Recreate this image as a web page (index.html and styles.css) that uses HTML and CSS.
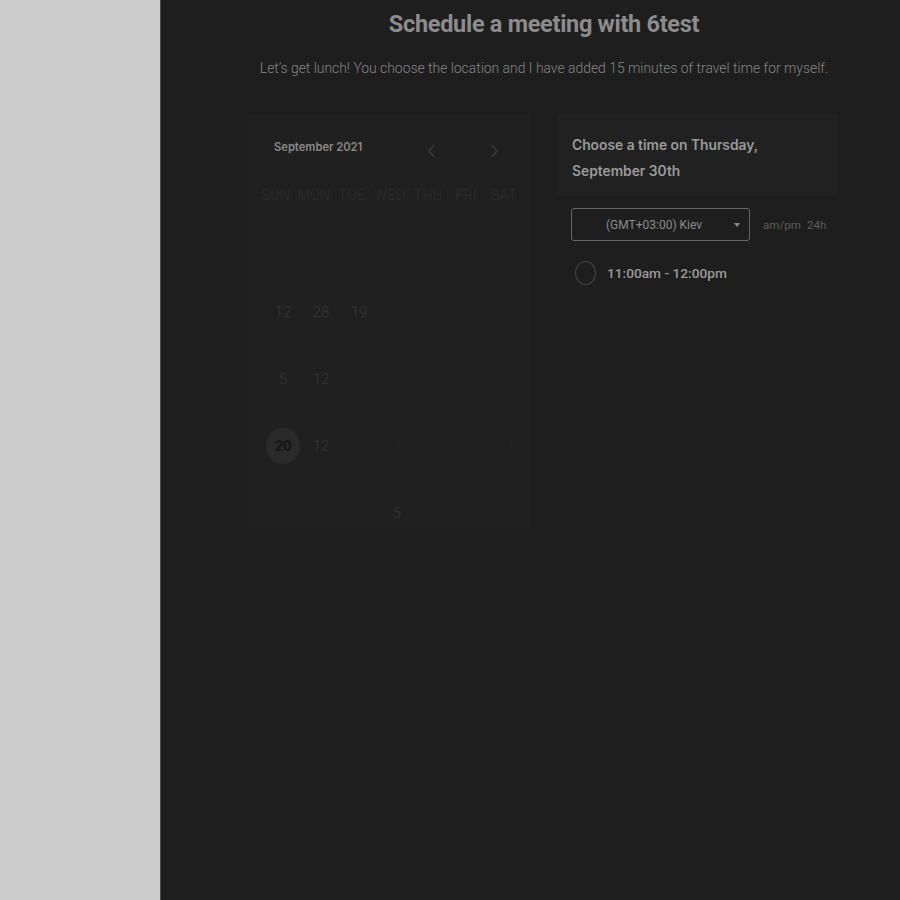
FILE: index.html
```html
<!DOCTYPE html>
<html>
<head>
<meta charset="utf-8">
<link rel="stylesheet" href="styles.css">
</head>
<body>
<div class="app">
  <aside class="sidebar"></aside>
  <main class="main">
    <div class="content">
      <h1 class="title">Schedule a meeting with 6test</h1>
      <p class="subtitle">Let’s get lunch! You choose the location and I have added 15 minutes of travel time for myself.</p>
      <div class="columns">
        <section class="calendar">
          <div class="cal-head">
            <span class="month">September 2021</span>
            <span class="arrows">
              <svg class="arrow" width="10" height="14" viewBox="0 0 10 14"><path d="M7 1 L2 7 L7 13" fill="none" stroke="currentColor" stroke-width="1.3"/></svg>
              <svg class="arrow" width="10" height="14" viewBox="0 0 10 14"><path d="M3 1 L8 7 L3 13" fill="none" stroke="currentColor" stroke-width="1.3"/></svg>
            </span>
          </div>
          <div class="grid dows">
            <span>SUN</span><span>MON</span><span>TUE</span><span>WED</span><span>THU</span><span>FRI</span><span>SAT</span>
          </div>
          <div class="grid days">
            <span class="ghost"></span><span class="ghost">·</span><span></span><span class="ghost">·</span><span></span><span></span><span class="ghost">·</span>
            <span>12</span><span>28</span><span>19</span><span class="ghost">1</span><span class="ghost">·</span><span></span><span class="ghost">·</span>
            <span>5</span><span>12</span><span class="ghost">·</span><span class="ghost">·</span><span></span><span class="ghost">·</span><span></span>
            <span class="sel"><b>20</b></span><span>12</span><span></span><span class="ghost">1</span><span class="ghost">·</span><span></span><span class="ghost">1</span>
            <span class="ghost">.</span><span></span><span></span><span>5</span><span class="ghost">.</span><span></span><span class="ghost">.</span>
          </div>
        </section>
        <section class="times">
          <div class="time-head">Choose a time on Thursday, September 30th</div>
          <div class="tz-row">
            <div class="select">
              <span>(GMT+03:00) Kiev</span>
              <svg class="caret" width="6" height="4" viewBox="0 0 6 4"><path d="M0 0 H6 L3 4 Z" fill="currentColor"/></svg>
            </div>
            <div class="fmt"><span>am/pm</span><span>24h</span></div>
          </div>
          <div class="slot">
            <span class="radio"></span>
            <span class="slot-text">11:00am - 12:00pm</span>
          </div>
        </section>
      </div>
    </div>
  </main>
</div>
</body>
</html>
```
FILE: styles.css
```css
html, body {
  margin: 0;
  padding: 0;
  height: 100%;
  background: #1e1e1e;
}
body {
  font-family: Roboto, "Liberation Sans", sans-serif;
}
.app {
  display: flex;
  height: 900px;
}
.sidebar {
  width: 160px;
  flex: none;
  background: #cccccc;
  border-right: 1px solid #4a4a4a;
}
.main {
  flex: 1;
  background: #1e1e1e;
}
.content {
  margin-left: 87px;
  width: 592px;
}
.title {
  margin: 10px 0 0;
  text-align: center;
  font-size: 23.5px;
  font-weight: 700;
  letter-spacing: -0.3px;
  color: #8c8c8c;
  line-height: 28px;
}
.subtitle {
  margin: 20px -8px 0;
  text-align: center;
  font-size: 13.9px;
  font-weight: 300;
  color: #858585;
  line-height: 20px;
}
.columns {
  margin-top: 36px;
  display: flex;
  gap: 27px;
  align-items: flex-start;
}
.calendar {
  width: 282px;
  height: 417px;
  background: #202020;
  box-sizing: border-box;
  padding: 20px 9px 0 9px;
}
.cal-head {
  display: flex;
  align-items: center;
  padding-left: 17px;
  height: 26px;
}
.month {
  font-family: Inter, sans-serif;
  font-size: 11.2px;
  font-weight: 600;
  color: #8a8a8a;
  width: 150px;
}
.arrows {
  display: flex;
  gap: 52px;
  margin-left: 3px;
  margin-top: 8px;
  color: #3c3c3c;
}
.grid {
  display: grid;
  grid-template-columns: repeat(7, 38px);
}
.dows {
  margin-top: 22px;
  height: 26px;
  align-items: center;
}
.dows span {
  text-align: center;
  font-size: 14px;
  font-weight: 300;
  letter-spacing: 0.5px;
  color: #2f2f2f;
}
.days {
  margin-top: 20px;
  margin-left: 7px;
  grid-auto-rows: 67px;
}
.days span {
  display: flex;
  align-items: center;
  justify-content: center;
  font-size: 15px;
  font-weight: 300;
  color: #363636;
  height: 34px;
}
.days span.ghost {
  color: #262626;
}
.days span.sel {
  width: 34px;
  height: 36px;
  margin-left: 2px;
  margin-top: -1px;
  border-radius: 50%;
  background: #2a2a2a;
}
.days span.sel b {
  font-size: 15px;
  font-weight: 700;
  color: #151515;
  letter-spacing: -0.5px;
}
.times {
  width: 280px;
}
.time-head {
  background: #212121;
  padding: 18px 60px 12px 15px;
  font-family: Inter, sans-serif;
  font-size: 13.8px;
  font-weight: 600;
  line-height: 26px;
  color: #9a9a9a;
  height: 52px;
}
.tz-row {
  display: flex;
  align-items: center;
  margin-top: 12px;
  padding-left: 14px;
}
.select {
  width: 179px;
  height: 33px;
  box-sizing: border-box;
  border: 1px solid #666;
  border-radius: 3px;
  display: flex;
  align-items: center;
  position: relative;
  padding-left: 34px;
  font-size: 12px;
  color: #8a8a8a;
}
.caret {
  position: absolute;
  right: 9px;
  top: 14px;
  color: #8a8a8a;
}
.fmt {
  margin-left: 13px;
  display: flex;
  gap: 6px;
  font-size: 11.6px;
  color: #5c5c5c;
}
.slot {
  display: flex;
  align-items: center;
  margin-top: 20px;
  padding-left: 18px;
}
.radio {
  width: 19px;
  height: 22px;
  border: 1.5px solid #454545;
  border-radius: 50%;
}
.slot-text {
  margin-left: 11px;
  font-size: 13.7px;
  font-weight: 500;
  color: #9a9a9a;
}
```
